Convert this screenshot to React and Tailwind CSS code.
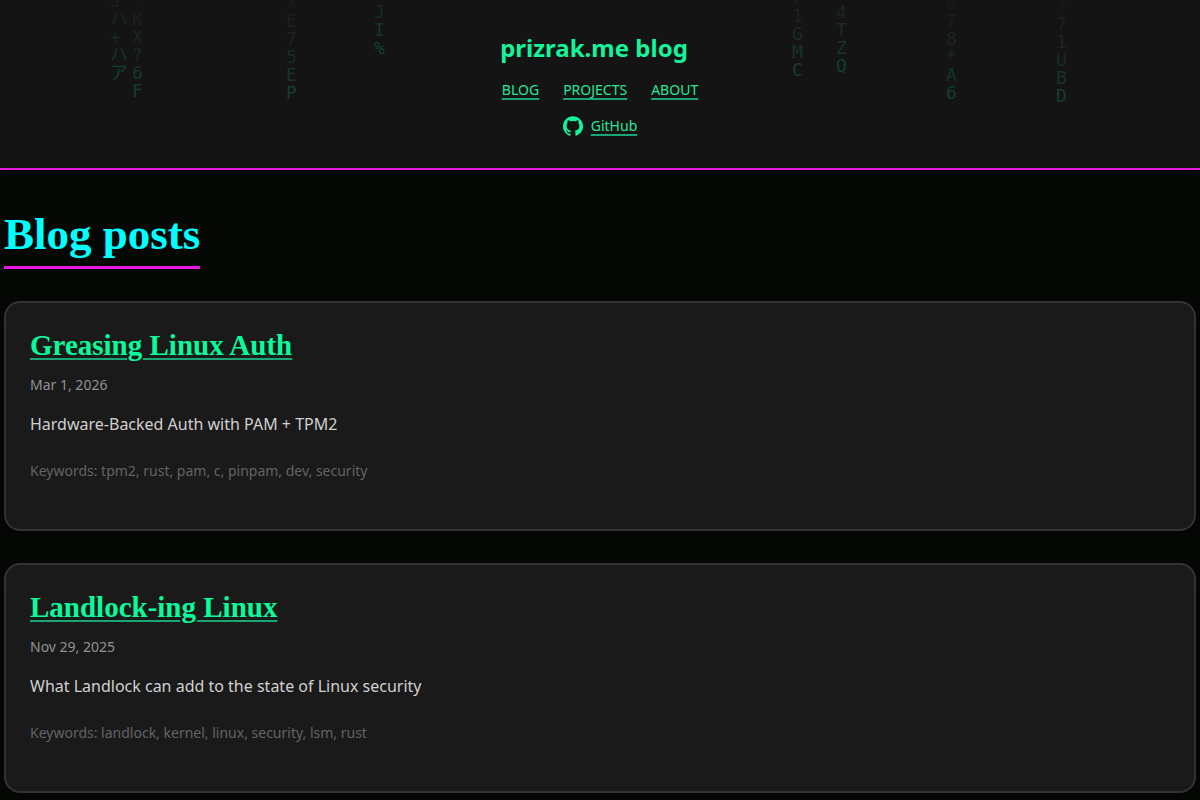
import React from "react";
import { SiGithub } from "react-icons/si";

const navLinks = ["Blog", "Projects", "About"];

const posts = [
  {
    title: "Greasing Linux Auth",
    date: "Mar 1, 2026",
    description: "Hardware-Backed Auth with PAM + TPM2",
    keywords: ["tpm2", "rust", "pam", "c", "pinpam", "dev", "security"],
  },
  {
    title: "Landlock-ing Linux",
    date: "Nov 29, 2025",
    description: "What Landlock can add to the state of Linux security",
    keywords: ["landlock", "kernel", "linux", "security", "lsm", "rust"],
  },
];

// falling glyph columns, x and bottom are in px inside the header
const rain = [
  { x: 110, bottom: 82, chars: "Jハ+ハア" },
  { x: 132, bottom: 100, chars: "*KX?6F" },
  { x: 286, bottom: 102, chars: "XE75EP" },
  { x: 374, bottom: 57, chars: "JI%" },
  { x: 792, bottom: 79, chars: "71GMC" },
  { x: 836, bottom: 75, chars: "4TZQ" },
  { x: 946, bottom: 102, chars: "678*A6" },
  { x: 1056, bottom: 105, chars: "?71UBD" },
];

// oldest glyphs fade into the panel colour
const fade = ["text-[#143e30]", "text-[#17352a]", "text-[#192b25]", "text-[#1b2522]", "text-[#1a201e]", "text-[#181b1a]"];

function MatrixRain() {
  return (
    <div
      aria-hidden="true"
      className="absolute inset-0 overflow-hidden pointer-events-none font-['DejaVu_Sans_Mono','Noto_Sans_CJK_JP',monospace] text-[18px] leading-[18px]"
    >
      {rain.map((col) => (
        <div
          key={col.x}
          className="absolute flex flex-col -translate-y-full"
          style={{ left: col.x, top: col.bottom }}
        >
          {[...col.chars].map((ch, i) => (
            <span key={i} className={fade[col.chars.length - 1 - i]}>
              {ch}
            </span>
          ))}
        </div>
      ))}
    </div>
  );
}

function Header() {
  return (
    <header className="relative bg-[#141414] border-b-2 border-[#e61ade] py-8 shadow-[0_4px_20px_rgba(0,0,0,0.3)]">
      <MatrixRain />
      <div className="relative flex flex-col items-center gap-4">
        <a href="#" className="flex items-center text-2xl leading-8 font-bold text-[#14f59b]">
          prizrak.me blog
          <span aria-hidden="true" className="w-3" />
        </a>
        <nav className="flex gap-6 text-sm">
          {navLinks.map((label) => (
            <a
              key={label}
              href="#"
              className="uppercase text-[#2ae59b] underline decoration-2 decoration-[#17a674] underline-offset-3"
            >
              {label}
            </a>
          ))}
        </nav>
        <a href="#" className="flex items-center gap-2 text-sm text-[#2ae59b]">
          <SiGithub className="size-5 text-[#14f59b]" />
          <span className="underline decoration-2 decoration-[#17a674] underline-offset-3">GitHub</span>
        </a>
      </div>
    </header>
  );
}

function PostCard({ post }) {
  return (
    <article className="bg-[#1a1a1a] border-2 border-[#333333] rounded-2xl p-6 shadow-[0_4px_20px_rgba(0,0,0,0.3)]">
      <h2 className="font-['Liberation_Serif',serif] text-[29px] leading-9 font-bold">
        <a
          href="#"
          className="text-[#0afa9c] underline decoration-2 decoration-[#17a674] underline-offset-3"
        >
          {post.title}
        </a>
      </h2>
      <p className="mt-2 text-sm leading-7 text-[#929292]">{post.date}</p>
      <p className="mt-3 text-base leading-[26px] text-[#d0d0d0]">{post.description}</p>
      <p className="mt-5 mb-5 text-sm leading-7 text-[#636363]">Keywords: {post.keywords.join(", ")}</p>
    </article>
  );
}

export default function App() {
  return (
    <div className="min-h-screen bg-[#050805] font-['Noto_Sans',sans-serif]">
      <Header />
      <main className="px-1 py-8">
        <h1 className="w-fit mb-8 border-b-3 border-[#e61ade] font-['Liberation_Serif',serif] text-[45px] leading-16 font-bold text-[#00ffff]">
          Blog posts
        </h1>
        <div className="flex flex-col gap-8">
          {posts.map((post) => (
            <PostCard key={post.title} post={post} />
          ))}
        </div>
      </main>
    </div>
  );
}
